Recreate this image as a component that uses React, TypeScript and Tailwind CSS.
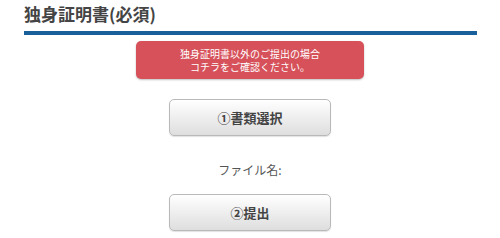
import React from 'react';

const font = { fontFamily: '"Noto Sans CJK JP", "Noto Sans", sans-serif' };

const GrayButton: React.FC<{ label: string }> = ({ label }) => (
  <button
    type="button"
    className="w-[162px] h-[37px] rounded-[5px] border border-[#b9b9b9] bg-gradient-to-b from-[#ffffff] to-[#dedede] shadow-[0_1px_1px_rgba(0,0,0,0.12)] text-[13px] font-bold text-[#444] flex items-center justify-center"
  >
    {label}
  </button>
);

const App: React.FC = () => {
  return (
    <div className="w-[500px] h-[238px] bg-white overflow-hidden" style={font}>
      <div className="pl-[24px] pr-[23px]">
        <h1 className="text-[17px] font-bold text-[#444] leading-[24px] pt-[2px] pb-[5px]">
          独身証明書(必須)
        </h1>
        <div className="h-[4px] bg-[#19609a]" />
      </div>

      <div className="flex flex-col items-center">
        <div className="mt-[6px] w-[228px] h-[38px] rounded-[5px] bg-[#d6515a] shadow-[0_1px_2px_rgba(0,0,0,0.25)] flex flex-col items-center justify-center text-white text-[10px] leading-[13px]">
          <span>独身証明書以外のご提出の場合</span>
          <span>コチラをご確認ください。</span>
        </div>

        <div className="mt-[20px]">
          <GrayButton label="①書類選択" />
        </div>

        <p className="mt-[26px] text-[12px] leading-[16px] text-[#555]">ファイル名:</p>

        <div className="mt-[16px]">
          <GrayButton label="②提出" />
        </div>
      </div>
    </div>
  );
};

export default App;
